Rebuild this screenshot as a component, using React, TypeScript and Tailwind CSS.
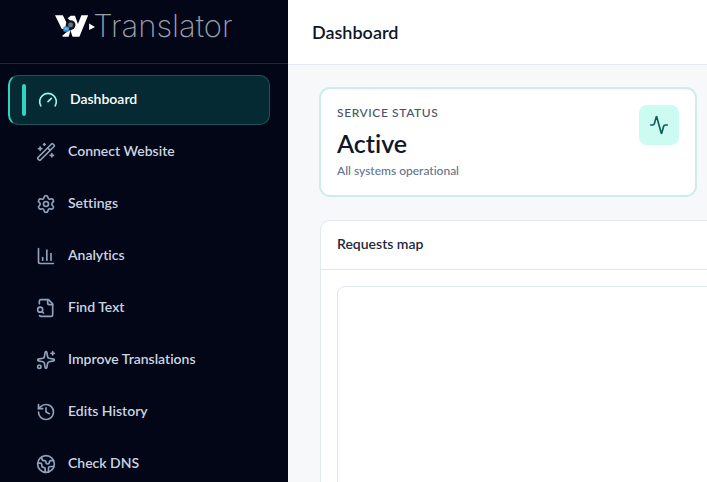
import type { ComponentType } from 'react'
import { clsx } from 'clsx'
import { Activity, ChartColumn, Earth, Gauge, History, Settings, Sparkles, WandSparkles } from 'lucide-react'

type IconProps = { size?: number; className?: string }
type NavItem = { label: string; href: string; icon: ComponentType<IconProps> }

function FileSearchIcon({ size = 24, className }: IconProps) {
  return (
    <svg
      width={size}
      height={size}
      viewBox="0 0 24 24"
      fill="none"
      stroke="currentColor"
      strokeWidth="2"
      strokeLinecap="round"
      strokeLinejoin="round"
      className={className}
      aria-hidden="true"
    >
      <path d="M14 2v4a2 2 0 0 0 2 2h4" />
      <path d="M4.268 21a2 2 0 0 0 1.727 1H18a2 2 0 0 0 2-2V7l-5-5H6a2 2 0 0 0-2 2v3" />
      <path d="m9 18-1.5-1.5" />
      <circle cx="5" cy="14" r="3" />
    </svg>
  )
}

const NAV_ITEMS: NavItem[] = [
  { label: 'Dashboard', href: '#dashboard', icon: Gauge },
  { label: 'Connect Website', href: '#connect', icon: WandSparkles },
  { label: 'Settings', href: '#settings', icon: Settings },
  { label: 'Analytics', href: '#analytics', icon: ChartColumn },
  { label: 'Find Text', href: '#find-text', icon: FileSearchIcon },
  { label: 'Improve Translations', href: '#improve', icon: Sparkles },
  { label: 'Edits History', href: '#history', icon: History },
  { label: 'Check DNS', href: '#dns', icon: Earth },
]

function Logo() {
  return (
    <a href="#home" aria-label="W-Translator" className="flex h-8 items-center">
      <svg width="40" height="22" viewBox="0 0 41 22" aria-hidden="true">
        <path d="M0 0h8l4 8-2 6H7z" fill="#fff" />
        <path d="M13 3l3-2.500h4.500l3 8.500L27 0h7l-9 22h-7l-2-6 4-6z" fill="#fff" />
        <path d="M7.500 21l5.500-4.500 3-1.500L14 22H8z" fill="#fff" />
        <circle cx="16" cy="10" r="5" fill="#14161f" />
        <circle cx="16" cy="10" r="2.500" fill="#6b7280" />
        <rect x="8.500" y="11.500" width="6" height="5.500" rx="1.500" fill="#3b8fd9" />
        <path d="M10 14h3" stroke="#b9dcff" />
        <path d="M35 8.500l6 3.500-6 3z" fill="#fff" />
      </svg>
      <span className="-ml-0.5 font-['Inter',sans-serif] text-[31px] leading-8 font-extralight text-[#9a9fab]">
        Translator
      </span>
    </a>
  )
}

function NavLink({ item, active }: { item: NavItem; active: boolean }) {
  const Icon = item.icon
  return (
    <a
      href={item.href}
      aria-current={active ? 'page' : undefined}
      className={clsx(
        'relative flex h-[50px] items-center gap-3 rounded-[10px] pl-7 text-sm font-semibold',
        active ? 'border border-l-2 border-[#1c5558] border-l-[#2dd4bf] bg-[#062a33] text-white' : 'text-slate-300',
      )}
    >
      {active && <span className="absolute left-3 h-8 w-1 rounded-full bg-[#2dd4bf]" />}
      <Icon size={20} className={active ? 'text-[#99f6e4]' : 'text-slate-400'} />
      <span className="pb-0.5">{item.label}</span>
    </a>
  )
}

function Sidebar() {
  return (
    <aside className="flex w-72 shrink-0 flex-col bg-[#020617]">
      <div className="flex h-16 shrink-0 items-start justify-center border-b border-slate-800 pt-2.5">
        <Logo />
      </div>
      <nav className="flex flex-col gap-0.5 pt-[11px] pr-[18px] pl-2">
        {NAV_ITEMS.map(item => (
          <NavLink key={item.label} item={item} active={item.label === 'Dashboard'} />
        ))}
      </nav>
    </aside>
  )
}

function StatusCard() {
  return (
    <section className="flex items-start justify-between rounded-[10px] border border-[#ccede9] bg-white p-4 ring-1 ring-[#ccede9]">
      <div>
        <p className="text-xs leading-4 font-medium tracking-wider text-slate-600">SERVICE STATUS</p>
        <p className="mt-1.5 text-[25px] leading-8 font-semibold text-slate-900">Active</p>
        <p className="mt-1 text-xs leading-4 font-medium text-slate-500">All systems operational</p>
      </div>
      <div className="flex size-10 items-center justify-center rounded-lg bg-[#ccfbf1] text-[#115e59]">
        <Activity size={20} />
      </div>
    </section>
  )
}

function RequestsMap() {
  return (
    <section className="flex flex-1 flex-col rounded-[10px] border border-slate-200 bg-white">
      <h2 className="border-b border-slate-200 px-4 pt-[13px] pb-[15px] text-sm leading-5 font-semibold text-slate-800">
        Requests map
      </h2>
      <div className="flex flex-1 p-4 pb-0">
        <div className="min-h-96 flex-1 rounded-lg border border-slate-200" />
      </div>
    </section>
  )
}

export default function App() {
  return (
    <div className="flex h-screen overflow-hidden bg-slate-50 font-['Lato',sans-serif] [font-variant-ligatures:none]">
      <Sidebar />
      <div className="flex min-w-0 flex-1 flex-col">
        <header className="flex h-[65px] shrink-0 items-center border-b border-slate-200 bg-white px-6">
          <h1 className="text-lg leading-6 font-semibold text-slate-900">Dashboard</h1>
        </header>
        <main className="flex-1 overflow-hidden bg-[#f7f8fa] px-8 pt-[23px]">
          <div className="flex min-w-[776px] flex-col gap-6">
            <div className="grid grid-cols-2 gap-6">
              <StatusCard />
            </div>
            <RequestsMap />
          </div>
        </main>
      </div>
    </div>
  )
}
